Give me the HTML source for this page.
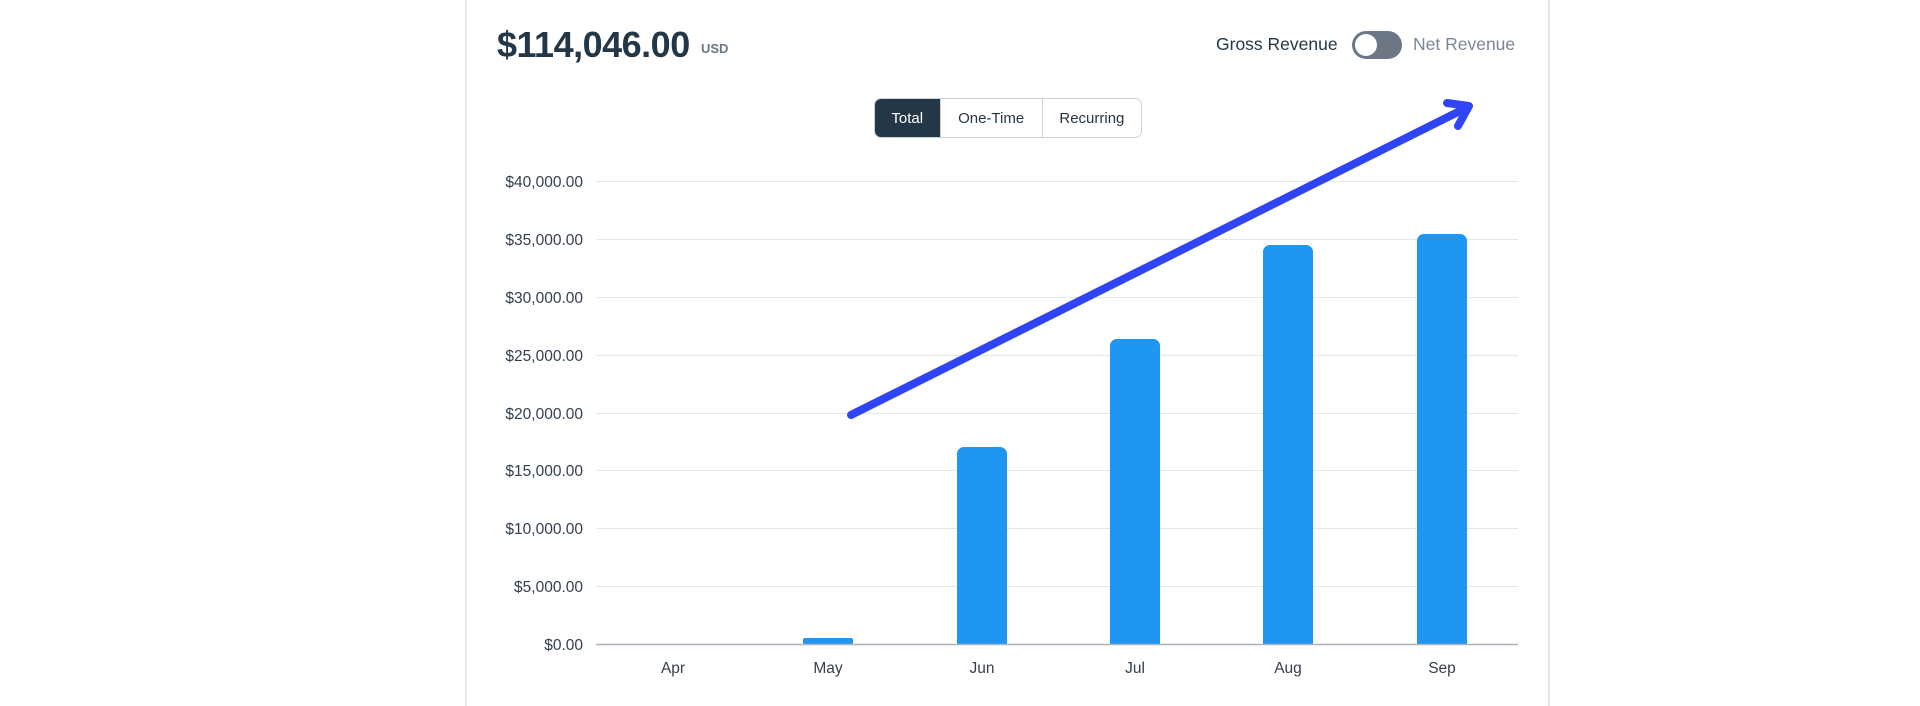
<!DOCTYPE html>
<html><head><meta charset="utf-8"><style>
*{margin:0;padding:0;box-sizing:border-box}
body{width:1920px;height:700px;background:#fff;position:relative;overflow:hidden;font-family:"Liberation Sans",sans-serif;color:#243746}
.card{position:absolute;left:465px;top:-4px;width:1085px;height:710px;border-left:2px solid #e6e9ee;border-right:2px solid #e3e7ed}
.abs{position:absolute;white-space:nowrap}
.seg{position:absolute;left:874px;top:98px;height:40px;width:268px;border:1px solid #c9d0d8;border-radius:7px;display:flex;overflow:hidden;font-size:15px}
.seg div{display:flex;align-items:center;justify-content:center;border-left:1px solid #c9d0d8}
</style></head><body>
<div class="card"></div>
<div class="abs" style="left:497px;top:24px;font-size:36px;font-weight:bold;letter-spacing:-0.5px;color:#243746">$114,046.00</div>
<div class="abs" style="left:701px;top:41px;font-size:13px;font-weight:bold;color:#6b7785">USD</div>
<div class="abs" style="left:1216px;top:34px;font-size:17.5px;color:#243746">Gross Revenue</div>
<div class="abs" style="left:1352px;top:31px;width:50px;height:28px;border-radius:14px;background:#6b7785"><div style="position:absolute;left:3px;top:3px;width:22px;height:22px;border-radius:50%;background:#fff"></div></div>
<div class="abs" style="left:1413px;top:34px;font-size:17.5px;color:#7a8795">Net Revenue</div>
<div class="seg"><div style="width:65px;background:#243746;color:#fff;border-left:none">Total</div><div style="width:103px">One-Time</div><div style="width:100px">Recurring</div></div>
<svg class="abs" style="left:0;top:0" width="1920" height="700">
<g stroke="#e3e7ed" stroke-width="1">
<line x1="596" x2="1518" y1="181.5" y2="181.5"/><line x1="596" x2="1518" y1="239.5" y2="239.5"/><line x1="596" x2="1518" y1="297.5" y2="297.5"/><line x1="596" x2="1518" y1="355.5" y2="355.5"/><line x1="596" x2="1518" y1="413.5" y2="413.5"/><line x1="596" x2="1518" y1="470.5" y2="470.5"/><line x1="596" x2="1518" y1="528.5" y2="528.5"/><line x1="596" x2="1518" y1="586.5" y2="586.5"/>
</g>
<g fill="#1e96f2">
<rect x="803" y="638" width="50" height="7" rx="2"/>
<path d="M957 644V454a7 7 0 0 1 7-7h36a7 7 0 0 1 7 7V644z"/>
<path d="M1110 644V346a7 7 0 0 1 7-7h36a7 7 0 0 1 7 7V644z"/>
<path d="M1263 644V252a7 7 0 0 1 7-7h36a7 7 0 0 1 7 7V644z"/>
<path d="M1417 644V241a7 7 0 0 1 7-7h36a7 7 0 0 1 7 7V644z"/>
</g>
<line x1="596" x2="1518" y1="644.5" y2="644.5" stroke="#a9b2bd" stroke-width="1.5"/>
<g font-family="Liberation Sans,sans-serif" font-size="15.5" fill="#333f4d" text-anchor="end">
<text x="583" y="187">$40,000.00</text><text x="583" y="245">$35,000.00</text><text x="583" y="303">$30,000.00</text><text x="583" y="361">$25,000.00</text><text x="583" y="419">$20,000.00</text><text x="583" y="476">$15,000.00</text><text x="583" y="534">$10,000.00</text><text x="583" y="592">$5,000.00</text><text x="583" y="650">$0.00</text>
</g>
<g font-family="Liberation Sans,sans-serif" font-size="15.5" fill="#333f4d" text-anchor="middle">
<text x="673" y="673">Apr</text><text x="828" y="673">May</text><text x="982" y="673">Jun</text><text x="1135" y="673">Jul</text><text x="1288" y="673">Aug</text><text x="1442" y="673">Sep</text>
</g>
<g stroke="#2f45f5" stroke-width="8" stroke-linecap="round" fill="none">
<line x1="851" y1="415" x2="1466" y2="108"/>
<polyline points="1447,103 1469,106 1458,126" stroke-linejoin="round"/>
</g>
</svg>
</body></html>
